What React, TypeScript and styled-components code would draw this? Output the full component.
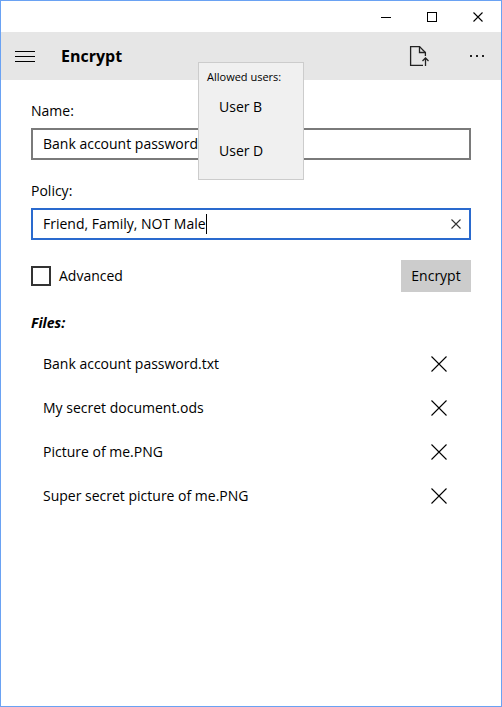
import React, { useState } from "react";
import styled, { createGlobalStyle } from "styled-components";

const GlobalStyle = createGlobalStyle`
  *, *::before, *::after { box-sizing: border-box; }
  body { margin: 0; background: #fff; }
  body, button, input { font: 14px/20px "Open Sans", "Noto Sans", sans-serif; color: #000; }
`;

const Window = styled.div`
  position: relative;
  display: flex;
  flex-direction: column;
  min-height: 100vh;
  border: 1px solid #6aa2f3;
  background: #fff;
`;

const TitleBar = styled.div`
  display: flex;
  justify-content: flex-end;
  height: 31px;
`;

const IconButton = styled.button<{ $width: number }>`
  display: flex;
  flex: none;
  align-items: center;
  justify-content: center;
  width: ${(p) => p.$width}px;
  padding: 0;
  border: 0;
  background: transparent;
`;

const CommandBar = styled.header`
  display: flex;
  height: 48px;
  background: #e6e6e6;
`;

const Title = styled.h1`
  flex: 1;
  margin: 0;
  padding-left: 12px;
  font-size: 16px;
  font-weight: 700;
  line-height: 48px;
`;

const Content = styled.main`
  display: flex;
  flex-direction: column;
  padding: 21px 30px;
`;

const Label = styled.label`
  margin-bottom: 7px;
`;

const Field = styled.div<{ $focused?: boolean }>`
  display: flex;
  align-items: center;
  height: 32px;
  margin-bottom: 21px;
  padding-left: 10px;
  border: 2px solid ${(p) => (p.$focused ? "#2a6ace" : "#7a7a7a")};
`;

const TextInput = styled.input<{ $fitText?: boolean }>`
  ${(p) => (p.$fitText ? "field-sizing: content;" : "flex: 1;")}
  min-width: 0;
  padding: 0;
  border: 0;
  outline: 0;
  background: transparent;
`;

const Caret = styled.span`
  width: 1px;
  height: 20px;
  background: #000;
`;

const ClearButton = styled(IconButton)`
  margin-left: auto;
`;

const Actions = styled.div`
  display: flex;
  align-items: center;
  justify-content: space-between;
  margin: -1px 0 21px;
`;

const CheckLabel = styled.label`
  display: flex;
  align-items: center;
  gap: 8px;
`;

const Checkbox = styled.input`
  appearance: none;
  width: 20px;
  height: 20px;
  margin: 0;
  border: 2px solid #333;
  background: #fff;
  &:checked { background: #2a6ace; }
`;

const EncryptButton = styled.button`
  min-width: 70px;
  height: 32px;
  padding: 0 8px;
  border: 0;
  background: #ccc;
`;

const FilesHeading = styled.h2`
  margin: 0 0 9px;
  font-size: 14px;
  font-style: italic;
  font-weight: 700;
  line-height: 20px;
`;

const FileList = styled.ul`
  margin: 0;
  padding: 0;
  list-style: none;
`;

const FileRow = styled.li`
  display: flex;
  align-items: center;
  justify-content: space-between;
  height: 44px;
  padding: 0 12px;
`;

const Popup = styled.aside`
  position: absolute;
  top: 61px;
  left: 197px;
  width: 106px;
  height: 118px;
  border: 1px solid #ccc;
  background: #f0f0f0;
`;

const PopupTitle = styled.div`
  padding: 5px 8px 0;
  font-size: 11px;
  line-height: 17px;
  white-space: nowrap;
`;

const UserList = styled.ul`
  margin: 0;
  padding: 0 20px;
  list-style: none;
  line-height: 44px;
`;

const Cross = ({ size, color = "#000" }: { size: number; color?: string }) => (
  <svg width={size} height={size} viewBox={`0 0 ${size} ${size}`} aria-hidden="true">
    <path
      d={`M.5 .5L${size - 0.5} ${size - 0.5}M${size - 0.5} .5L.5 ${size - 0.5}`}
      fill="none"
      stroke={color}
      strokeWidth="1.1"
    />
  </svg>
);

const files = [
  "Bank account password.txt",
  "My secret document.ods",
  "Picture of me.PNG",
  "Super secret picture of me.PNG",
];
const users = ["User B", "User D"];

export default function App() {
  const [name, setName] = useState("Bank account password");
  const [policy, setPolicy] = useState("Friend, Family, NOT Male");
  const [list, setList] = useState(files);

  return (
    <>
      <GlobalStyle />
      <Window>
        <TitleBar>
          <IconButton $width={46} aria-label="Minimize">
            <svg width="10" height="10" viewBox="0 0 10 10" shapeRendering="crispEdges">
              <path d="M0 5.5H10" stroke="#000" />
            </svg>
          </IconButton>
          <IconButton $width={46} aria-label="Maximize">
            <svg width="10" height="10" viewBox="0 0 10 10" shapeRendering="crispEdges">
              <rect x=".5" y=".5" width="9" height="9" fill="none" stroke="#000" />
            </svg>
          </IconButton>
          <IconButton $width={46} aria-label="Close">
            <Cross size={10} />
          </IconButton>
        </TitleBar>
        <CommandBar>
          <IconButton $width={48} aria-label="Menu">
            <svg width="20" height="11" viewBox="0 0 20 11" shapeRendering="crispEdges">
              <path d="M0 .5H20M0 5.5H20M0 10.5H20" stroke="#000" />
            </svg>
          </IconButton>
          <Title>Encrypt</Title>
          <IconButton $width={68} aria-label="Add file">
            <svg width="20" height="20" viewBox="0 0 20 20" fill="none" stroke="#222" strokeWidth="1.3">
              <path d="M14 19.4H1.6V.6H10.5L16.4 6.5V10" />
              <path d="M10.5 .6V6.5H16.4" />
              <path d="M16.5 20V12.2M13.5 15L16.5 12L19.5 15" />
            </svg>
          </IconButton>
          <IconButton $width={48} aria-label="More">
            <svg width="14" height="2" viewBox="0 0 14 2" fill="#222">
              <path d="M0 0H2V2H0ZM6 0H8V2H6ZM12 0H14V2H12Z" />
            </svg>
          </IconButton>
        </CommandBar>
        <Content>
          <Label htmlFor="name">Name:</Label>
          <Field>
            <TextInput id="name" value={name} onChange={(e) => setName(e.target.value)} />
          </Field>
          <Label htmlFor="policy">Policy:</Label>
          <Field $focused>
            <TextInput id="policy" $fitText value={policy} onChange={(e) => setPolicy(e.target.value)} />
            <Caret />
            <ClearButton $width={26} aria-label="Clear policy" onClick={() => setPolicy("")}>
              <Cross size={10} color="#333" />
            </ClearButton>
          </Field>
          <Actions>
            <CheckLabel>
              <Checkbox type="checkbox" />
              Advanced
            </CheckLabel>
            <EncryptButton>Encrypt</EncryptButton>
          </Actions>
          <FilesHeading>Files:</FilesHeading>
          <FileList>
            {list.map((file) => (
              <FileRow key={file}>
                {file}
                <IconButton
                  $width={40}
                  aria-label={`Remove ${file}`}
                  onClick={() => setList(list.filter((f) => f !== file))}
                >
                  <Cross size={16} />
                </IconButton>
              </FileRow>
            ))}
          </FileList>
        </Content>
        <Popup>
          <PopupTitle>Allowed users:</PopupTitle>
          <UserList>
            {users.map((user) => (
              <li key={user}>{user}</li>
            ))}
          </UserList>
        </Popup>
      </Window>
    </>
  );
}
